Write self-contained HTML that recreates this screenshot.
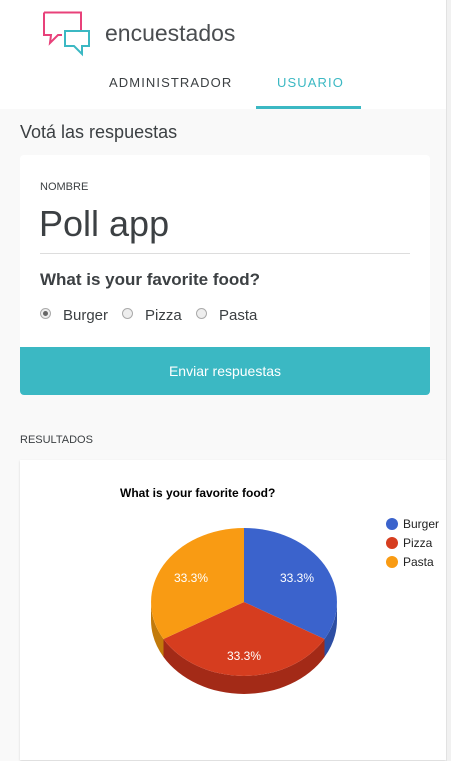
<!DOCTYPE html>
<html><head><meta charset="utf-8"><style>
*{margin:0;padding:0;box-sizing:border-box}
body{width:451px;height:761px;overflow:hidden;background:#f9f9f9;font-family:"Liberation Sans",sans-serif;position:relative;color:#3c4043}
.hdr{position:absolute;left:0;top:0;width:446px;height:109px;background:#fff}
.sb{position:absolute;left:446px;top:0;width:5px;height:761px;background:#f1f1f1;border-left:1px solid #e2e2e2}
.t{position:absolute;white-space:nowrap}
</style></head><body>
<div class="hdr"></div>
<svg style="position:absolute;left:40px;top:10px" width="55" height="48">
<path d="M4 2.5H41V21" fill="none" stroke="#e8417a" stroke-width="2"/>
<path d="M4 2.5V25H11L10 33L18 25H22" fill="none" stroke="#e8417a" stroke-width="2"/>
<path d="M25 21H49V36H42V44L34 36H25Z" fill="none" stroke="#3bb8c3" stroke-width="2"/>
</svg>
<div class="t" style="left:105px;top:20px;font-size:23px;color:#4a4d50">encuestados</div>
<div class="t" style="left:109px;top:75px;font-size:13px;letter-spacing:1.1px;color:#3c4043">ADMINISTRADOR</div>
<div class="t" style="left:277px;top:75px;font-size:13px;letter-spacing:1.1px;color:#3bb8c3">USUARIO</div>
<div style="position:absolute;left:256px;top:106px;width:105px;height:3px;background:#3bb8c3"></div>
<div class="t" style="left:20px;top:122px;font-size:18px">Votá las respuestas</div>
<div style="position:absolute;left:20px;top:155px;width:410px;height:240px;background:#fff;border-radius:4px;overflow:hidden">
<div class="t" style="left:20px;top:26px;font-size:11px">NOMBRE</div>
<div class="t" style="left:19px;top:48px;font-size:36px">Poll app</div>
<div style="position:absolute;left:20px;top:98px;width:370px;height:1px;background:#ddd"></div>
<div class="t" style="left:20px;top:115px;font-size:17px;font-weight:bold;color:#3c4043">What is your favorite food?</div>
<div style="position:absolute;left:20px;top:153px;width:11px;height:11px;border-radius:50%;border:1px solid #aaa;background:#eee"><div style="position:absolute;left:2px;top:2px;width:5px;height:5px;border-radius:50%;background:#666"></div></div>
<div class="t" style="left:43px;top:152px;font-size:15px">Burger</div>
<div style="position:absolute;left:102px;top:153px;width:11px;height:11px;border-radius:50%;border:1px solid #aaa;background:#eee"></div>
<div class="t" style="left:125px;top:152px;font-size:15px">Pizza</div>
<div style="position:absolute;left:176px;top:153px;width:11px;height:11px;border-radius:50%;border:1px solid #aaa;background:#eee"></div>
<div class="t" style="left:199px;top:152px;font-size:15px">Pasta</div>
<div style="position:absolute;left:0;top:192px;width:410px;height:48px;background:#3bb8c3;color:#fff;font-size:14px;text-align:center;line-height:48px">Enviar respuestas</div>
</div>
<div class="t" style="left:20px;top:434px;font-size:11px">RESULTADOS</div>
<div style="position:absolute;left:20px;top:460px;width:426px;height:300px;background:#fff;box-shadow:0 1px 2px rgba(0,0,0,.15)"></div>
<svg style="position:absolute;left:0;top:0" width="451" height="761">
<path d="M151 602V620A93 74 0 0 0 163.5 657V639A93 74 0 0 1 151 602Z" fill="#c27a0b"/>
<path d="M163.5 639A93 74 0 0 0 324.5 639V657A93 74 0 0 1 163.5 657Z" fill="#a32a17"/>
<path d="M324.5 639A93 74 0 0 0 337 602V620A93 74 0 0 1 324.5 657Z" fill="#2d4ea3"/>
<path d="M244 602V528A93 74 0 0 1 324.5 639Z" fill="#3b63cc"/>
<path d="M244 602L324.5 639A93 74 0 0 1 163.5 639Z" fill="#d63d1f"/>
<path d="M244 602L163.5 639A93 74 0 0 1 244 528Z" fill="#f99b13"/>
<g font-family="Liberation Sans,sans-serif" font-size="12" fill="#fff">
<text x="174" y="582">33.3%</text><text x="280" y="582">33.3%</text><text x="227" y="660">33.3%</text></g>
<text x="120" y="497" font-family="Liberation Sans,sans-serif" font-size="12" font-weight="bold" fill="#000">What is your favorite food?</text>
<circle cx="392" cy="524" r="6" fill="#3b63cc"/><circle cx="392" cy="543" r="6" fill="#d63d1f"/><circle cx="392" cy="562" r="6" fill="#f99b13"/>
<g font-family="Liberation Sans,sans-serif" font-size="12" fill="#222"><text x="403" y="528">Burger</text><text x="403" y="547">Pizza</text><text x="403" y="566">Pasta</text></g>
</svg>
<div class="sb"></div>
</body></html>
